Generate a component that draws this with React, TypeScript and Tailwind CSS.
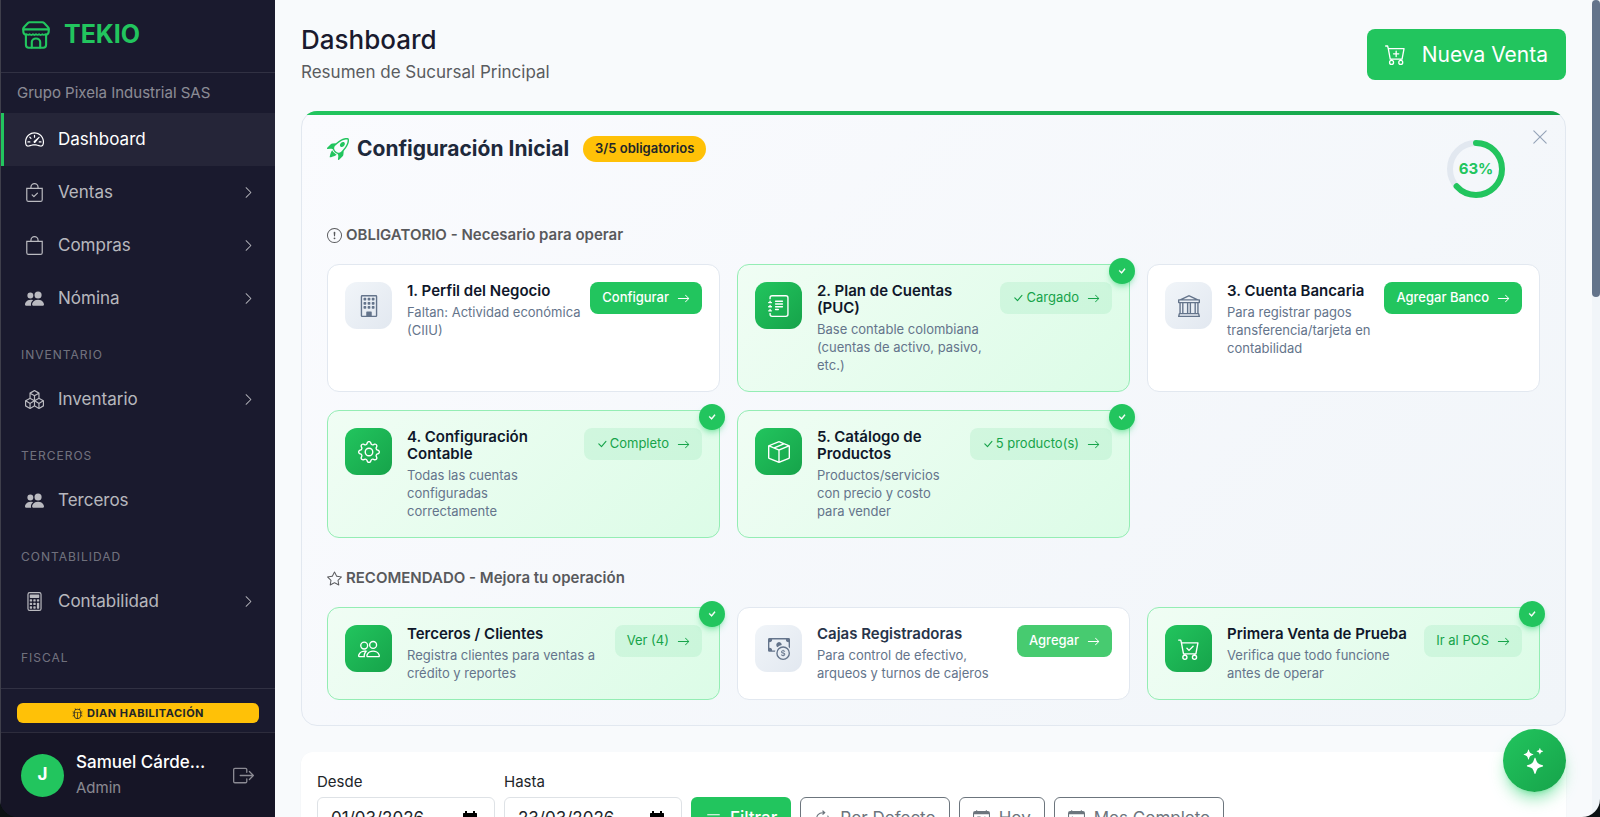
import type { ReactNode } from 'react'
import type { IconType } from 'react-icons'
import {
  BsArrowClockwise,
  BsArrowRight,
  BsBag,
  BsBagCheck,
  BsBank,
  BsBoxArrowRight,
  BsBoxSeam,
  BsBoxes,
  BsBug,
  BsBuilding,
  BsCalculator,
  BsCalendarDay,
  BsCalendarMonth,
  BsCartCheck,
  BsCartPlus,
  BsCashCoin,
  BsCheck,
  BsCheckLg,
  BsChevronRight,
  BsExclamationCircle,
  BsFilter,
  BsGear,
  BsJournalText,
  BsPeople,
  BsPeopleFill,
  BsRocketTakeoff,
  BsSpeedometer2,
  BsStar,
  BsStars,
  BsXLg,
} from 'react-icons/bs'

type Step = {
  title: string
  text: string
  icon: IconType
  action: string
  done?: boolean
  check?: boolean
  faded?: boolean
}

const required: Step[] = [
  { title: '1. Perfil del Negocio', text: 'Faltan: Actividad económica (CIIU)', icon: BsBuilding, action: 'Configurar' },
  { title: '2. Plan de Cuentas (PUC)', text: 'Base contable colombiana (cuentas de activo, pasivo, etc.)', icon: BsJournalText, action: 'Cargado', done: true, check: true },
  { title: '3. Cuenta Bancaria', text: 'Para registrar pagos transferencia/tarjeta en contabilidad', icon: BsBank, action: 'Agregar Banco' },
  { title: '4. Configuración Contable', text: 'Todas las cuentas configuradas correctamente', icon: BsGear, action: 'Completo', done: true, check: true },
  { title: '5. Catálogo de Productos', text: 'Productos/servicios con precio y costo para vender', icon: BsBoxSeam, action: '5 producto(s)', done: true, check: true },
]

const recommended: Step[] = [
  { title: 'Terceros / Clientes', text: 'Registra clientes para ventas a crédito y reportes', icon: BsPeople, action: 'Ver (4)', done: true },
  { title: 'Cajas Registradoras', text: 'Para control de efectivo, arqueos y turnos de cajeros', icon: BsCashCoin, action: 'Agregar', faded: true },
  { title: 'Primera Venta de Prueba', text: 'Verifica que todo funcione antes de operar', icon: BsCartCheck, action: 'Ir al POS', done: true },
]

function Logo() {
  return (
    <svg viewBox="0 0 28 28" className="size-7" fill="none" stroke="currentColor" strokeWidth={2.1} strokeLinejoin="round" strokeLinecap="round">
      <path d="M7.6 1.3h12.8c.7 0 1.2.2 1.7.7l4 4.2c.4.4.6.8.6 1.3v.9H1.3v-.9c0-.5.2-.9.6-1.3l4-4.2c.5-.5 1-.7 1.7-.7Z" />
      <path d="M1.3 8.4v2c0 1.700 1 2.900 2.600 3.400M26.700 8.400v2c0 1.700-1 2.900-2.600 3.400" />
      <path strokeWidth={1.7} d="M4.500 13.200c1.200.8 2.300.8 3.200 0 .9.900 2.300.9 3.200 0 .9.900 2.200.9 3.100 0 .9.900 2.200.9 3.100 0 .9.900 2.300.9 3.200 0 .9.800 2 .8 3.200 0" />
      <path d="M3.9 13.800v9.900c0 1.800 1.100 3 2.900 3h14.400c1.800 0 2.900-1.200 2.900-3v-9.900" />
      <path d="M9.800 26.500v-5.400c0-2.100 1.800-3.600 4.200-3.600s4.200 1.500 4.200 3.600v5.400" />
    </svg>
  )
}

function NavItem({ icon: Icon, label, active, arrow }: { icon: IconType; label: string; active?: boolean; arrow?: boolean }) {
  return (
    <a
      href="#"
      className={
        active
          ? 'flex h-[53px] shrink-0 items-center gap-3.5 border-l-[3px] border-[#22c55e] bg-white/5 pl-[21px] pr-5 text-white'
          : 'flex h-[53px] shrink-0 items-center gap-3.5 border-l-[3px] border-transparent pl-[21px] pr-5 text-white/70'
      }
    >
      <Icon className="size-[19px]" />
      <span className="flex-1 text-[17px]">{label}</span>
      {arrow && <BsChevronRight className="size-[13px]" />}
    </a>
  )
}

function NavLabel({ children }: { children: ReactNode }) {
  return (
    <div className="h-12 shrink-0 pl-5 pt-[22px] text-xs leading-4 tracking-[1px] text-white/40">
      {children}
    </div>
  )
}

function Sidebar() {
  return (
    <aside className="flex w-[275px] shrink-0 flex-col border-l border-[#3f3f4b] bg-[#1a1a2e]">
      <div className="flex h-[73px] shrink-0 items-center gap-3.5 border-b border-white/10 pb-0.5 pl-[21px] text-[25px] font-bold text-[#22c55e]">
        <Logo />
        TEKIO
      </div>
      <div className="flex h-10 shrink-0 items-center pl-4 text-[15px] text-white/50">Grupo Pixela Industrial SAS</div>
      <nav className="flex min-h-0 flex-1 flex-col overflow-hidden">
        <NavItem icon={BsSpeedometer2} label="Dashboard" active />
        <NavItem icon={BsBagCheck} label="Ventas" arrow />
        <NavItem icon={BsBag} label="Compras" arrow />
        <NavItem icon={BsPeopleFill} label="Nómina" arrow />
        <NavLabel>INVENTARIO</NavLabel>
        <NavItem icon={BsBoxes} label="Inventario" arrow />
        <NavLabel>TERCEROS</NavLabel>
        <NavItem icon={BsPeopleFill} label="Terceros" />
        <NavLabel>CONTABILIDAD</NavLabel>
        <NavItem icon={BsCalculator} label="Contabilidad" arrow />
        <NavLabel>FISCAL</NavLabel>
      </nav>
      <div className="shrink-0 border-t border-white/10 px-4 pb-[9px] pt-3.5">
        <div className="flex h-5 items-center justify-center gap-1 rounded-md bg-[#ffc107] text-[11px] font-bold tracking-[0.5px] text-[#212529]">
          <BsBug className="size-[11px]" />
          DIAN HABILITACIÓN
        </div>
      </div>
      <div className="flex h-[85px] shrink-0 items-center border-t border-white/10 bg-[#161526] pl-5 pr-[21px]">
        <div className="flex size-[43px] shrink-0 items-center justify-center rounded-full bg-[#22c55e] text-[17px] font-bold text-white">J</div>
        <div className="ml-3 w-[132px]">
          <div className="truncate text-[17px] font-medium leading-[26px] text-white">Samuel Cárdenas</div>
          <div className="text-[15px] leading-[26px] text-white/50">Admin</div>
        </div>
        <button className="ml-auto text-white/50" aria-label="Cerrar sesión">
          <BsBoxArrowRight className="size-[21px]" />
        </button>
      </div>
    </aside>
  )
}

function StepCard({ step }: { step: Step }) {
  const Icon = step.icon
  return (
    <div
      className={
        step.done
          ? 'relative flex items-start rounded-xl border border-[#94edb4] bg-linear-135 from-[#f0fdf4] to-[#dcfce7] p-[17px]'
          : 'relative flex items-start rounded-xl border border-[#e2e8f0] bg-white p-[17px]'
      }
    >
      <div
        className={
          step.done
            ? 'mr-[15px] flex size-[47px] shrink-0 items-center justify-center rounded-xl bg-linear-135 from-[#22c55e] to-[#16a34a] text-white'
            : 'mr-[15px] flex size-[47px] shrink-0 items-center justify-center rounded-xl bg-linear-135 from-[#f1f5f9] to-[#e2e8f0] text-[#64748b]'
        }
      >
        <Icon className="size-[22px]" />
      </div>
      <div className="min-w-0 flex-1">
        <h3 className={step.faded ? 'text-[15px] font-semibold leading-[17px] text-[#273449]' : 'text-[15px] font-semibold leading-[17px] text-[#0f172a]'}>
          {step.title}
        </h3>
        <p className="mt-1 text-[13px] leading-[18px] text-[#64748b]">{step.text}</p>
      </div>
      <button
        className={
          step.done
            ? 'ml-2 flex h-8 shrink-0 items-center rounded-lg bg-[#22c55e]/10 px-3 text-[13px] text-[#16a34a]'
            : step.faded
              ? 'ml-2 flex h-8 shrink-0 items-center rounded-lg bg-[#47cb70] px-3 text-[13px] font-medium text-white'
              : 'ml-2 flex h-8 shrink-0 items-center rounded-lg bg-[#22c55e] px-3 text-[13px] font-medium text-white'
        }
      >
        {step.check && <BsCheckLg className="mr-0.5 size-3" />}
        {step.action}
        <BsArrowRight className="ml-2 size-[13px]" />
      </button>
      {step.done && (
        <span className="absolute -right-1.5 -top-[7px] flex size-[26px] items-center justify-center rounded-full bg-[#22c55e] text-white shadow-md shadow-green-500/30">
          <BsCheck className="size-3" strokeWidth={0.5} />
        </span>
      )}
    </div>
  )
}

function ProgressRing({ value }: { value: number }) {
  const length = 2 * Math.PI * 26
  return (
    <div className="relative mr-[34px] mt-[3px] size-[60px]">
      <svg viewBox="0 0 60 60" className="size-[60px] -rotate-90" fill="none" strokeWidth={6}>
        <circle cx="30" cy="30" r="26" stroke="#e2e8f0" />
        <circle cx="30" cy="30" r="26" stroke="#22c55e" strokeLinecap="round" strokeDasharray={`${(length * value) / 100} ${length}`} />
      </svg>
      <span className="absolute inset-0 flex items-center justify-center text-[15px] font-bold text-[#22c55e]">{value}%</span>
    </div>
  )
}

function SetupPanel() {
  return (
    <section className="relative mt-[27px] rounded-2xl border border-[#e2e8f0] bg-linear-135 from-[#fafbfe] to-[#f1f5f9] px-[25px] pb-[25px] pt-6">
      <div className="pointer-events-none absolute -inset-px overflow-hidden rounded-2xl">
        <div className="h-1 bg-linear-to-r from-[#22c55e] to-[#16a34a]" />
      </div>
      <button className="absolute right-4 top-4 text-[#94a3b8]" aria-label="Cerrar">
        <BsXLg className="size-[18px]" />
      </button>
      <div className="flex items-start justify-between">
        <div className="flex items-center">
          <BsRocketTakeoff className="size-[22px] text-[#22c55e]" />
          <h2 className="ml-2 text-[21px] font-bold leading-[26px] text-[#1e293b]">Configuración Inicial</h2>
          <span className="ml-3.5 flex h-[26px] items-center rounded-full bg-[#ffc107] px-3 text-[13px] font-semibold text-[#212529]">3/5 obligatorios</span>
        </div>
        <ProgressRing value={63} />
      </div>
      <h3 className="mt-[26px] flex h-5 items-center gap-1 text-[15px] font-semibold text-[#58595c]">
        <BsExclamationCircle className="size-[15px]" />
        OBLIGATORIO - Necesario para operar
      </h3>
      <div className="mt-[19px] grid grid-cols-3 gap-x-[17px] gap-y-[18px]">
        {required.map((step) => (
          <StepCard key={step.title} step={step} />
        ))}
      </div>
      <h3 className="mt-[30px] flex h-5 items-center gap-1 text-[15px] font-semibold text-[#58595c]">
        <BsStar className="size-[15px]" />
        RECOMENDADO - Mejora tu operación
      </h3>
      <div className="mt-[19px] grid grid-cols-3 gap-x-[17px]">
        {recommended.map((step) => (
          <StepCard key={step.title} step={step} />
        ))}
      </div>
    </section>
  )
}

function DateField({ id, label, value }: { id: string; label: string; value: string }) {
  return (
    <div className="w-[178px]">
      <label htmlFor={id} className="block text-[15px] leading-6 text-[#212529]">
        {label}
      </label>
      <div className="mt-[3px] flex h-[43px] items-center rounded-md border border-[#dee2e6] bg-white pl-[13px] pr-4 text-black">
        <input id={id} defaultValue={value} className="min-w-0 flex-1 text-[17px] text-[#212529] outline-none" />
        <svg viewBox="0 0 16 16" className="size-4" fill="currentColor">
          <path d="M3 0h2v2h6V0h2v2h1.500l.5.500V15l-.5.500h-13L1 15V2.500L1.500 2H3V0Zm-.5 6v8h11V6h-11Z" />
        </svg>
      </div>
    </div>
  )
}

function Filters() {
  const outline = 'flex h-[43px] items-center gap-[9px] rounded-md border border-[#6c757d] px-[13px] text-[17px] text-[#6c757d]'
  return (
    <form className="mt-[26px] flex items-end gap-[9px] rounded-xl bg-white px-4 py-[18px] shadow-xs" onSubmit={(e) => e.preventDefault()}>
      <DateField id="desde" label="Desde" value="01/03/2026" />
      <DateField id="hasta" label="Hasta" value="23/03/2026" />
      <button className="flex h-[43px] items-center gap-2 rounded-md bg-[#22c55e] px-3.5 text-[17px] font-medium text-white">
        <BsFilter className="size-[17px]" />
        Filtrar
      </button>
      <button type="button" className={outline}>
        <BsArrowClockwise className="size-[17px]" />
        Por Defecto
      </button>
      <button type="button" className={outline}>
        <BsCalendarDay className="size-[17px]" />
        Hoy
      </button>
      <button type="button" className={outline}>
        <BsCalendarMonth className="size-[17px]" />
        Mes Completo
      </button>
    </form>
  )
}

export default function App() {
  return (
    <div className="h-screen bg-[#0c1214] font-[Inter,sans-serif]">
      <div className="flex h-full overflow-hidden rounded-b-[18px]">
        <Sidebar />
        <main className="min-w-0 flex-1 overflow-hidden bg-[#f8fafc] px-[26px] pt-[26px]">
          <header className="flex items-start justify-between">
            <div>
              <h1 className="text-[26px] font-medium leading-7 text-[#1a1a2e]">Dashboard</h1>
              <p className="mt-1.5 text-[17px] leading-6 text-[#5a5c60]">Resumen de Sucursal Principal</p>
            </div>
            <button className="mt-[3px] flex h-[51px] items-center gap-4 rounded-lg bg-[#22c55e] px-[18px] text-[21px] text-white">
              <BsCartPlus className="size-[21px]" />
              Nueva Venta
            </button>
          </header>
          <SetupPanel />
          <Filters />
        </main>
        <div className="w-2 shrink-0 bg-[#f1f5f9]">
          <div className="h-[297px] rounded-full bg-[#64748b]" />
        </div>
      </div>
      <button
        className="fixed bottom-[25px] right-[34px] flex size-[63px] items-center justify-center rounded-full bg-linear-135 from-[#22c55e] to-[#16a34a] text-white shadow-lg shadow-green-500/40"
        aria-label="Asistente"
      >
        <BsStars className="size-[26px]" />
      </button>
    </div>
  )
}
